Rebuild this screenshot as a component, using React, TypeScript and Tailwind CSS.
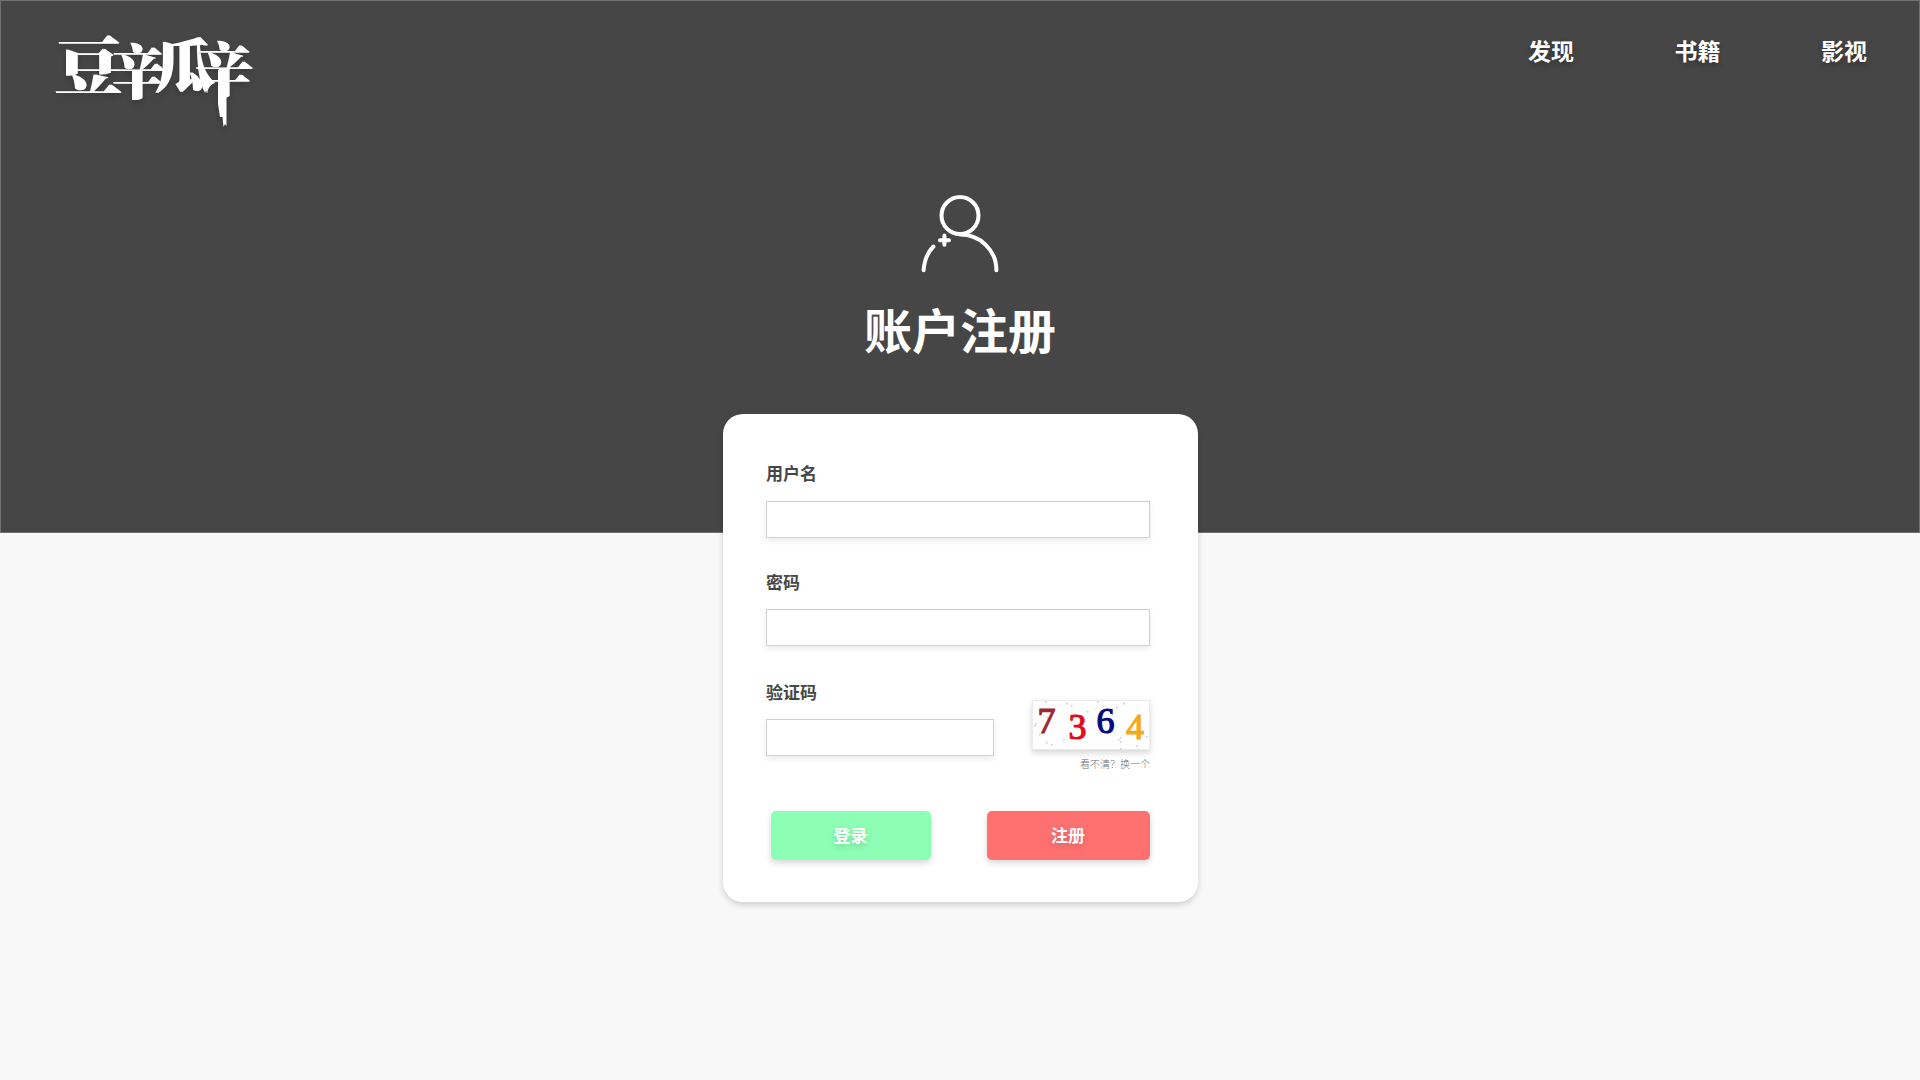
import React from "react";

const CAPTCHA_DOTS = [
  [13, 1], [8, 12], [15, 17], [3, 23], [2, 25], [7, 34], [14, 42], [19, 44], [34, 3], [39, 5],
  [31, 39], [55, 11], [65, 1], [80, 14], [84, 7], [91, 3], [86, 39], [88, 37], [88, 41], [104, 45],
  [114, 36], [88, 48],
];

function Logo() {
  return (
    <svg
      className="h-[100px] w-[206px] overflow-visible drop-shadow-[0_3px_3px_rgba(0,0,0,0.2)]"
      viewBox="50 30 206 100"
      fill="white"
      role="img"
      aria-label="豆辛瓜辛"
    >
      {/* Thickens the vertical strokes while the horizontal hairlines stay thin */}
      <filter id="heavy-stems" x="-5%" y="-5%" width="110%" height="110%">
        <feMorphology operator="dilate" radius="1 0" />
      </filter>
      <g
        filter="url(#heavy-stems)"
        fontFamily="'Noto Serif CJK SC', 'Noto Sans CJK SC', serif"
        fontWeight="900"
        fontSize="60"
      >
        <text transform="translate(55 89.5) scale(1.12 1.07)">豆</text>
        <text transform="translate(109.5 94) scale(0.93 0.98)">辛</text>
        <text transform="translate(155 87) scale(1 0.97)">瓜</text>
        <text transform="translate(195.5 91.5) scale(0.96 0.98)">辛</text>
      </g>
      <path d="M218 70H226.5V126L225 124L223.5 127L222.5 117H220L218 104Z" />
    </svg>
  );
}

function UserPlusIcon() {
  return (
    <svg className="mt-px h-20 w-20" viewBox="0 0 80 80" fill="none" stroke="white" strokeWidth="4" strokeLinecap="round">
      <circle cx="40" cy="20.6" r="18.5" />
      <path d="M40 39.6C60 39.6 76.4 55 76.4 75.2" />
      <path d="M3.6 75.2C4.4 65 8 57 13.4 51.5" />
      <path d="M24.4 40.6V49.8M20 45.2H29" />
    </svg>
  );
}

function Captcha() {
  return (
    <svg
      className="block h-[50px] w-[118px] bg-white shadow-[0_3px_6px_rgba(0,0,0,0.16)]"
      viewBox="0 0 118 50"
      fontFamily="'Liberation Serif', serif"
      fontSize="36"
    >
      <rect x="0.5" y="0.5" width="117" height="49" fill="#fefefe" stroke="#ebebeb" />
      {CAPTCHA_DOTS.map(([x, y]) => (
        <rect key={`${x}-${y}`} x={x} y={y} width="1.5" height="1.5" fill="#c9c9ce" />
      ))}
      <g strokeWidth="1.2">
        <text x="5.5" y="33" fill="#9c2830" stroke="#9c2830">7</text>
        <text x="36.5" y="39" fill="#e00c18" stroke="#e00c18">3</text>
        <text x="64.5" y="33" fill="#08087c" stroke="#08087c">6</text>
        <text x="94" y="39" fill="#f5a81c" stroke="#f5a81c">4</text>
      </g>
    </svg>
  );
}

const label = "block h-[25px] pl-[0.5px] text-[17px] leading-[25px] font-bold text-[#464646]";
const input =
  "block h-[37px] border border-[#d0d0d0] bg-white px-2 shadow-[0_3px_6px_rgba(0,0,0,0.08)] outline-none";
const button =
  "h-[49px] rounded-[5px] pb-[2px] text-[17px] font-bold text-white shadow-[0_3px_6px_rgba(0,0,0,0.16)] [text-shadow:0_3px_6px_rgba(0,0,0,0.16)]";

export default function App() {
  return (
    <div className="h-[1080px] w-full overflow-hidden bg-[#f8f8f8] font-['Noto_Sans_CJK_SC',sans-serif]">
      <header className="h-[533px] border border-[#707070] bg-[#464646] text-white">
        <div className="flex h-[193px] items-start justify-between pt-[29px] pr-[52px] pl-[49px]">
          <Logo />
          <nav className="flex gap-[100.5px] text-[23px] leading-[34px] font-bold [text-shadow:0_3px_6px_rgba(0,0,0,0.3)]">
            <a className="mt-[3px]">发现</a>
            <a className="mt-[3px]">书籍</a>
            <a className="mt-[3px]">影视</a>
          </nav>
        </div>
        <div className="flex flex-col items-center">
          <UserPlusIcon />
          <h1 className="mt-[18px] text-[48px] leading-[71px] font-bold">账户注册</h1>
        </div>
      </header>

      <main className="relative mx-auto -mt-[119px] h-[488px] w-[475px] rounded-[20px] bg-white pt-[46px] pr-[48px] pl-[43px] shadow-[0_3px_6px_rgba(0,0,0,0.16)]">
        <form>
          <label className={label} htmlFor="user">用户名</label>
          <input id="user" className={`${input} mt-[16px] w-full`} />
          <label className={`${label} mt-[31px]`} htmlFor="password">密码</label>
          <input id="password" type="password" className={`${input} mt-[15px] w-full`} />
          <div className="mt-[33px] flex justify-between">
            <div>
              <label className={label} htmlFor="code">验证码</label>
              <input id="code" className={`${input} mt-[15px] w-[228px]`} />
            </div>
            <div className="mt-[21px] text-right">
              <Captcha />
              <a className="-mr-[0.5px] mt-[6px] mb-px block text-[10px] leading-[15px] font-light text-[#707070]">看不清？换一个</a>
            </div>
          </div>
          <div className="mt-[39px] flex justify-between pl-[5px]">
            <button type="button" className={`${button} w-[160px] bg-[#8cffb4]`}>登录</button>
            <button type="button" className={`${button} w-[163px] bg-[#ff7171]`}>注册</button>
          </div>
        </form>
      </main>
    </div>
  );
}
